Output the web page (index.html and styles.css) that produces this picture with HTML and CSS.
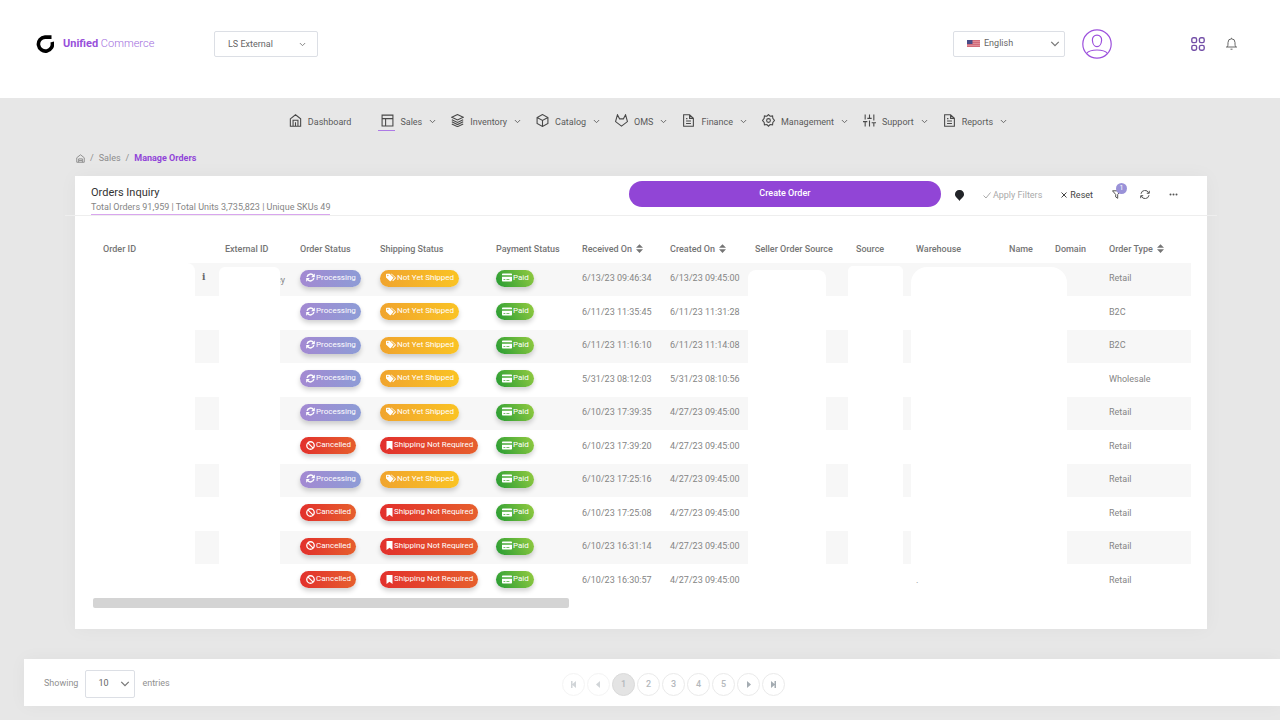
FILE: index.html
```html
<!DOCTYPE html>
<html lang="en">
<head>
<meta charset="utf-8">
<meta name="viewport" content="width=device-width, initial-scale=1">
<title>Manage Orders</title>
<link rel="stylesheet" href="styles.css">
</head>
<body>
<svg class="sprite" aria-hidden="true">
  <symbol id="chevron" viewBox="0 0 24 24"><path d="M3 7l9 9 9-9"/></symbol>
  <symbol id="home" viewBox="0 0 24 24"><path d="M2.500 9L12 1.500 21.500 9v13.500h-19zM7.500 22V11.500h9V22M12 15v7"/></symbol>
  <symbol id="layout" viewBox="0 0 24 24"><path d="M2 2h20v20H2zM2 8.500h20M8.500 8.500V22"/></symbol>
  <symbol id="layers" viewBox="0 0 24 24"><path d="M12 1L1.500 6 12 11l10.500-5zM1.500 10.500L12 15.500l10.500-5M1.500 14.500L12 19.500l10.500-5M1.500 18.500L12 23.300l10.500-4.800"/></symbol>
  <symbol id="box" viewBox="0 0 24 24"><path d="M12 1L2 6.500v11L12 23l10-5.500v-11zM2 6.500L12 12l10-5.500M12 12v11"/></symbol>
  <symbol id="gitlab" viewBox="0 0 24 24"><path d="M12 22.500L1 14 4.500 1.500l4 7.500h7l4-7.500L23 14z"/></symbol>
  <symbol id="file" viewBox="0 0 24 24"><path d="M14 1.500H3v21h18V8zM14 1.500V8h7M7.500 13h9M7.500 17.500h9M7.500 8.500H10"/></symbol>
  <symbol id="gear" viewBox="0 0 24 24"><path d="M12 1l3 3 4.500-.500.500 4.500 3 4-3 3.500-.500 4.500-4.500-.500-3 3-3-3-4.500.500-.500-4.500L1 12l3-4 .500-4.500L9 4z"/><circle cx="12" cy="12" r="3.500"/></symbol>
  <symbol id="sliders" viewBox="0 0 24 24"><path d="M4 23v-9M4 10V1M12 23V12M12 8V1M20 23v-7M20 12V1M0 14h8M8 8h8M16 16h8"/></symbol>
  <symbol id="sort" viewBox="0 0 8 10"><path d="M4 0l4 4.200H0zM4 10L0 5.800h8z"/></symbol>
  <symbol id="sync" viewBox="0 0 24 24"><path d="M3 10.500A9.500 9.500 0 0 1 20 7M21 13.500A9.500 9.500 0 0 1 4 17" fill="none" stroke="currentColor" stroke-width="4"/><path d="M23.500 1v10h-10zM.500 23V13h10z"/></symbol>
  <symbol id="tags" viewBox="0 0 30 24"><path fill-rule="evenodd" d="M0 3a2 2 0 0 1 2-2h9l12 12-9 10a2 2 0 0 1-2 0L0 12zM5.500 4a2 2 0 1 0 0 4 2 2 0 0 0 0-4z"/><path d="M14 1h3l12 11c1 1 1 2 0 3l-8 8-2-2 8-8z"/></symbol>
  <symbol id="ban" viewBox="0 0 24 24"><g fill="none" stroke="currentColor" stroke-width="3.500"><circle cx="12" cy="12" r="10"/><path d="M5 5l14 14"/></g></symbol>
  <symbol id="bookmark" viewBox="0 0 18 24"><path d="M1 0h16v24l-8-6-8 6z"/></symbol>
  <symbol id="card" viewBox="0 0 27 22"><path fill-rule="evenodd" d="M0 2a2 2 0 0 1 2-2h23a2 2 0 0 1 2 2v3H0zM0 9h27v11a2 2 0 0 1-2 2H2a2 2 0 0 1-2-2zM4 15v2h5v-2zM12 15v2h8v-2z"/></symbol>
</svg>

<header class="topbar">
  <a class="brand" href="#">
    <svg class="brand-mark" viewBox="0 0 18 18" aria-hidden="true"><path d="M15.500 2.100H9A7 7 0 1 0 16.100 7" fill="none" stroke="#000" stroke-width="3.600"/></svg>
    <span class="brand-name"><b>Unified</b> Commerce</span>
  </a>
  <div class="select account">
    <select aria-label="Account"><option>LS External</option></select>
    <svg class="caret small" aria-hidden="true"><use href="#chevron"/></svg>
  </div>
  <div class="top-right">
    <div class="select language">
      <svg class="flag" viewBox="0 0 13 7" aria-hidden="true"><path fill="#df8c96" d="M0 0h13v7H0z"/><path stroke="#d16b7a" stroke-width="1" d="M0 .500h13M0 2.500h13M0 4.500h13M0 6.500h13"/><path fill="#484b86" d="M0 0h5.500v4H0z"/></svg>
      <select aria-label="Language"><option>English</option></select>
      <svg class="caret" aria-hidden="true"><use href="#chevron"/></svg>
    </div>
    <button class="plain avatar" aria-label="Profile"><svg viewBox="0 0 30 30" aria-hidden="true"><circle cx="15" cy="15" r="14.200"/><path d="M15 6.200c3 0 4.800 2 4.600 5-.200 3.500-2 6.500-4.600 6.500s-4.400-3-4.600-6.500c-.200-3 1.600-5 4.600-5zM4.500 24.500C6.500 22 10.500 21 15 21s8.500 1 10.500 3.500"/></svg></button>
    <button class="plain apps" aria-label="Apps"><svg viewBox="0 0 14 14" aria-hidden="true"><rect x=".8" y=".8" width="4.800" height="4.800" rx="1.600"/><rect x="8.400" y=".8" width="4.800" height="4.800" rx="1.600"/><rect x=".8" y="8.400" width="4.800" height="4.800" rx="1.600"/><rect x="8.400" y="8.400" width="4.800" height="4.800" rx="1.600"/></svg></button>
    <button class="plain bell" aria-label="Notifications"><svg viewBox="0 0 12 13" aria-hidden="true"><path d="M.500 10h11M1.800 10c.6-1 .7-2 .7-4.500a3.500 3.700 0 0 1 7 0C9.500 8 9.600 9 10.200 10M6 .8v1M5 12.200h2"/></svg></button>
  </div>
</header>

<nav class="menu" aria-label="Main">
  <a class="menu-item first" href="#"><svg class="mi"><use href="#home"/></svg><span>Dashboard</span></a>
  <a class="menu-item active" href="#"><svg class="mi"><use href="#layout"/></svg><span>Sales</span><svg class="mc"><use href="#chevron"/></svg></a>
  <a class="menu-item" href="#"><svg class="mi"><use href="#layers"/></svg><span>Inventory</span><svg class="mc"><use href="#chevron"/></svg></a>
  <a class="menu-item" href="#"><svg class="mi"><use href="#box"/></svg><span>Catalog</span><svg class="mc"><use href="#chevron"/></svg></a>
  <a class="menu-item" href="#"><svg class="mi"><use href="#gitlab"/></svg><span>OMS</span><svg class="mc"><use href="#chevron"/></svg></a>
  <a class="menu-item" href="#"><svg class="mi"><use href="#file"/></svg><span>Finance</span><svg class="mc"><use href="#chevron"/></svg></a>
  <a class="menu-item" href="#"><svg class="mi"><use href="#gear"/></svg><span>Management</span><svg class="mc"><use href="#chevron"/></svg></a>
  <a class="menu-item" href="#"><svg class="mi"><use href="#sliders"/></svg><span>Support</span><svg class="mc"><use href="#chevron"/></svg></a>
  <a class="menu-item" href="#"><svg class="mi"><use href="#file"/></svg><span>Reports</span><svg class="mc"><use href="#chevron"/></svg></a>
</nav>

<main>
  <nav class="crumbs" aria-label="Breadcrumb">
    <a href="#" aria-label="Home"><svg class="crumb-home" viewBox="0 0 24 24"><path d="M2 10L12 2l10 8v12H2zM7 22v-9h10v9M8 17.500h8"/></svg></a>
    <span>/</span><a href="#">Sales</a><span>/</span><a class="current" href="#" aria-current="page">Manage Orders</a>
  </nav>

  <section class="card">
    <header class="card-head">
      <div class="titles">
        <h1>Orders Inquiry</h1>
        <p>Total Orders 91,959 | Total Units 3,735,823 | Unique SKUs 49</p>
      </div>
      <button class="create">Create Order</button>
      <button class="plain" aria-label="Location"><svg class="pin" viewBox="0 0 9 11" aria-hidden="true"><path d="M4.500 0A4.300 4.300 0 0 1 9 4.500C9 7 6 8.500 4.500 11 3 8.500 0 7 0 4.500A4.300 4.300 0 0 1 4.500 0z"/></svg></button>
      <button class="plain apply" disabled><svg class="tick" viewBox="0 0 8 8" aria-hidden="true"><path d="M.500 4.500L3 7l4.500-5.500"/></svg>Apply Filters</button>
      <button class="plain reset"><svg class="cross" viewBox="0 0 6 6" aria-hidden="true"><path d="M.500.500l5 5M5.500.500l-5 5"/></svg>Reset</button>
      <button class="plain filter" aria-label="Filters"><svg viewBox="0 0 9 9" aria-hidden="true"><path d="M.500.800h8L5.700 4.500v3.800L3.700 7V4.500z"/></svg><span class="count">1</span></button>
      <button class="plain refresh" aria-label="Refresh"><svg viewBox="0 0 10 9" aria-hidden="true"><path d="M1 3.800A4 4 0 0 1 8.700 3M9 5.200A4 4 0 0 1 1.300 6M9.300.8V3.300H6.800M.700 8.200V5.700h2.500"/></svg></button>
      <button class="plain more" aria-label="More"><svg viewBox="0 0 9 3" aria-hidden="true"><circle cx="1.500" cy="1.500" r="1"/><circle cx="4.500" cy="1.500" r="1"/><circle cx="7.500" cy="1.500" r="1"/></svg></button>
    </header>

    <div class="table-wrap">
      <table>
        <colgroup><col class="w-id"><col class="w-info"><col class="w-ext"><col class="w-status"><col class="w-ship"><col class="w-pay"><col class="w-recv"><col class="w-made"><col class="w-seller"><col class="w-source"><col class="w-house"><col class="w-name"><col class="w-domain"><col class="w-type"></colgroup>
        <thead>
          <tr><th>Order ID</th><td></td><th>External ID</th><th>Order Status</th><th>Shipping Status</th><th>Payment Status</th><th>Received On<svg class="sort"><use href="#sort"/></svg></th><th>Created On<svg class="sort"><use href="#sort"/></svg></th><th>Seller Order Source</th><th>Source</th><th>Warehouse</th><th>Name</th><th>Domain</th><th>Order Type<svg class="sort"><use href="#sort"/></svg></th></tr>
        </thead>
        <tbody>
          <tr><td></td><td class="info">i</td><td class="ext">cy</td><td><span class="badge violet"><svg class="sq"><use href="#sync"/></svg>Processing</span></td><td><span class="badge amber"><svg class="wide"><use href="#tags"/></svg>Not Yet Shipped</span></td><td><span class="badge green"><svg class="wide"><use href="#card"/></svg>Paid</span></td><td>6/13/23 09:46:34</td><td>6/13/23 09:45:00</td><td></td><td></td><td></td><td></td><td></td><td>Retail</td></tr>
          <tr><td></td><td></td><td></td><td><span class="badge violet"><svg class="sq"><use href="#sync"/></svg>Processing</span></td><td><span class="badge amber"><svg class="wide"><use href="#tags"/></svg>Not Yet Shipped</span></td><td><span class="badge green"><svg class="wide"><use href="#card"/></svg>Paid</span></td><td>6/11/23 11:35:45</td><td>6/11/23 11:31:28</td><td></td><td></td><td></td><td></td><td></td><td>B2C</td></tr>
          <tr><td></td><td></td><td></td><td><span class="badge violet"><svg class="sq"><use href="#sync"/></svg>Processing</span></td><td><span class="badge amber"><svg class="wide"><use href="#tags"/></svg>Not Yet Shipped</span></td><td><span class="badge green"><svg class="wide"><use href="#card"/></svg>Paid</span></td><td>6/11/23 11:16:10</td><td>6/11/23 11:14:08</td><td></td><td></td><td></td><td></td><td></td><td>B2C</td></tr>
          <tr><td></td><td></td><td></td><td><span class="badge violet"><svg class="sq"><use href="#sync"/></svg>Processing</span></td><td><span class="badge amber"><svg class="wide"><use href="#tags"/></svg>Not Yet Shipped</span></td><td><span class="badge green"><svg class="wide"><use href="#card"/></svg>Paid</span></td><td>5/31/23 08:12:03</td><td>5/31/23 08:10:56</td><td></td><td></td><td></td><td></td><td></td><td>Wholesale</td></tr>
          <tr><td></td><td></td><td></td><td><span class="badge violet"><svg class="sq"><use href="#sync"/></svg>Processing</span></td><td><span class="badge amber"><svg class="wide"><use href="#tags"/></svg>Not Yet Shipped</span></td><td><span class="badge green"><svg class="wide"><use href="#card"/></svg>Paid</span></td><td>6/10/23 17:39:35</td><td>4/27/23 09:45:00</td><td></td><td></td><td></td><td></td><td></td><td>Retail</td></tr>
          <tr><td></td><td></td><td></td><td><span class="badge red"><svg class="sq"><use href="#ban"/></svg>Cancelled</span></td><td><span class="badge red"><svg class="slim"><use href="#bookmark"/></svg>Shipping Not Required</span></td><td><span class="badge green"><svg class="wide"><use href="#card"/></svg>Paid</span></td><td>6/10/23 17:39:20</td><td>4/27/23 09:45:00</td><td></td><td></td><td></td><td></td><td></td><td>Retail</td></tr>
          <tr><td></td><td></td><td></td><td><span class="badge violet"><svg class="sq"><use href="#sync"/></svg>Processing</span></td><td><span class="badge amber"><svg class="wide"><use href="#tags"/></svg>Not Yet Shipped</span></td><td><span class="badge green"><svg class="wide"><use href="#card"/></svg>Paid</span></td><td>6/10/23 17:25:16</td><td>4/27/23 09:45:00</td><td></td><td></td><td></td><td></td><td></td><td>Retail</td></tr>
          <tr><td></td><td></td><td></td><td><span class="badge red"><svg class="sq"><use href="#ban"/></svg>Cancelled</span></td><td><span class="badge red"><svg class="slim"><use href="#bookmark"/></svg>Shipping Not Required</span></td><td><span class="badge green"><svg class="wide"><use href="#card"/></svg>Paid</span></td><td>6/10/23 17:25:08</td><td>4/27/23 09:45:00</td><td></td><td></td><td></td><td></td><td></td><td>Retail</td></tr>
          <tr><td></td><td></td><td></td><td><span class="badge red"><svg class="sq"><use href="#ban"/></svg>Cancelled</span></td><td><span class="badge red"><svg class="slim"><use href="#bookmark"/></svg>Shipping Not Required</span></td><td><span class="badge green"><svg class="wide"><use href="#card"/></svg>Paid</span></td><td>6/10/23 16:31:14</td><td>4/27/23 09:45:00</td><td></td><td></td><td></td><td></td><td></td><td>Retail</td></tr>
          <tr><td></td><td></td><td></td><td><span class="badge red"><svg class="sq"><use href="#ban"/></svg>Cancelled</span></td><td><span class="badge red"><svg class="slim"><use href="#bookmark"/></svg>Shipping Not Required</span></td><td><span class="badge green"><svg class="wide"><use href="#card"/></svg>Paid</span></td><td>6/10/23 16:30:57</td><td>4/27/23 09:45:00</td><td></td><td></td><td class="above">.</td><td></td><td></td><td>Retail</td></tr>
        </tbody>
      </table>
      <div class="redactions" aria-hidden="true"><i class="r1"></i><i class="r2"></i><i class="r3"></i><i class="r4"></i><i class="r5"></i></div>
    </div>
    <div class="scroll-track"><div class="scroll-thumb"></div></div>
  </section>
</main>

<footer class="pager">
  <div class="page-size">
    <label for="size">Showing</label>
    <div class="select size"><select id="size"><option>10</option></select><svg class="caret" aria-hidden="true"><use href="#chevron"/></svg></div>
    <span>entries</span>
  </div>
  <div class="pages">
    <button class="page" disabled aria-label="First"><svg viewBox="0 0 7 7"><path d="M1 0h1.500v3L6 0v7L2.500 4v3H1z"/></svg></button>
    <button class="page" disabled aria-label="Previous"><svg viewBox="0 0 7 7"><path d="M5 0v7L1 3.500z"/></svg></button>
    <button class="page on" aria-current="page">1</button>
    <button class="page">2</button>
    <button class="page">3</button>
    <button class="page">4</button>
    <button class="page">5</button>
    <button class="page" aria-label="Next"><svg viewBox="0 0 7 7"><path d="M2 0v7l4-3.500z"/></svg></button>
    <button class="page" aria-label="Last"><svg viewBox="0 0 7 7"><path d="M6 0H4.500v3L1 0v7l3.500-3v3H6z"/></svg></button>
  </div>
</footer>
</body>
</html>
```

FILE: styles.css
```css
* { box-sizing: border-box; }
body { margin: 0; background: #e7e7e7; color: #858585; font: 9px/12px Roboto, "Liberation Sans", sans-serif; }
a { color: inherit; text-decoration: none; }
svg { display: block; flex: none; fill: none; stroke: currentColor; }
button, select { font: inherit; color: inherit; }
.sprite { position: absolute; width: 0; height: 0; }
.plain { display: flex; align-items: center; padding: 0; border: 0; background: none; }

.topbar { display: flex; align-items: flex-start; height: 98px; padding: 28px 42px 0 36px; background: #fff; }
.brand { display: flex; align-items: center; gap: 9px; height: 31px; width: 178px; }
.brand-mark { width: 18px; height: 18px; }
.brand-name { font-size: 11px; font-weight: 300; color: #a06bdd; }
.brand-name b { font-weight: 700; color: #9850da; }

.select { position: relative; }
.select select { appearance: none; width: 100%; height: 100%; padding: 0 13px 1px; border: 1px solid #dcdfe5; border-radius: 2px; background: #fff; color: #666; }
.caret { position: absolute; right: 5px; top: 50%; width: 10px; height: 10px; margin-top: -5px; color: #777; stroke-width: 3; pointer-events: none; }
.caret.small { right: 12px; width: 7px; height: 7px; margin-top: -3px; }
.account { width: 104px; height: 26px; margin-top: 3px; }
.top-right { display: flex; align-items: center; height: 31px; margin-left: auto; }
.language { width: 112px; height: 26px; margin-right: 17px; }
.language select { padding-left: 30px; }
.flag { position: absolute; left: 14px; top: 9px; width: 13px; height: 7px; stroke: none; }
.avatar svg { width: 30px; height: 30px; stroke: #9c50dc; stroke-width: 1.200; }
.apps { margin-left: 79px; color: #7450a8; }
.apps svg { width: 14px; height: 14px; stroke-width: 1.400; }
.bell { margin-left: 20px; color: #666; }
.bell svg { width: 13px; height: 13px; }

.menu { display: flex; justify-content: center; gap: 16px; padding: 14px 0 0 15px; color: #5a5a5a; }
.menu-item { display: flex; align-items: center; gap: 7px; height: 19px; }
.menu-item span { margin-top: 1px; }
.menu-item.first { margin-right: 14px; }
.mi { width: 13px; height: 13px; margin: 0 -1px 2px 0; color: #484848; stroke-width: 2; }
.mc { width: 7px; height: 7px; margin-right: -1px; stroke-width: 3; }
.active { position: relative; }
.active::before { content: ""; position: absolute; left: -3px; bottom: 0; width: 17px; height: 1px; background: #ad7ae6; }

.crumbs { display: flex; align-items: center; gap: 5px; padding: 21px 0 12px 76px; color: #8c8c8c; }
.crumb-home { width: 9px; height: 9px; stroke-width: 2.500; }
.crumbs .current { color: #9145d8; font-weight: 700; }

.card { margin: 0 73px 0 75px; padding-bottom: 21px; background: #fff; box-shadow: 0 0 18px rgba(0, 0, 0, .04); }
.card-head { position: relative; display: flex; align-items: center; gap: 19px; height: 39px; padding: 0 29px 0 16px; }
.card-head::after { content: ""; position: absolute; left: -10px; right: -10px; bottom: -1px; height: 1px; background: #eee; }
.card-head .plain { margin-bottom: 2px; }
.titles { align-self: flex-end; margin-right: auto; }
h1 { margin: 0; font-size: 11px; line-height: 14px; font-weight: 400; color: #333; }
.titles p { margin: 0; line-height: 14px; border-bottom: 1px solid #d9a6ee; }
.create { flex: 0 1 312px; height: 26px; margin: 0 -5px 4px 0; padding: 0 0 2px; border: 0; border-radius: 13px; background: #9145d6; color: #fff; font-weight: 500; }
.pin { width: 9px; height: 11px; margin-top: 2px; stroke: none; fill: #222529; }
.apply { gap: 2px; color: #aaa; }
.tick { width: 8px; height: 8px; }
.reset { gap: 3px; color: #444; }
.cross { width: 6px; height: 6px; }
.filter { position: relative; color: #555; }
.filter svg { width: 9px; height: 9px; }
.count { position: absolute; left: 4px; top: -7px; width: 11px; height: 11px; border-radius: 50%; background: #9a92d8; color: #fff; font-size: 7px; line-height: 11px; text-align: center; }
.refresh svg { width: 10px; height: 9px; color: #555; }
.more svg { width: 9px; height: 3px; fill: #555; stroke: none; }

.table-wrap { position: relative; margin: 19px 16px 0 18px; }
table { width: 100%; table-layout: fixed; border-collapse: collapse; }
.w-id { width: 103px; } .w-info { width: 22px; } .w-ext { width: 75px; } .w-status { width: 80px; }
.w-ship { width: 116px; } .w-pay { width: 86px; } .w-recv { width: 88px; } .w-made { width: 85px; }
.w-seller { width: 101px; } .w-source { width: 60px; } .w-house { width: 93px; } .w-name { width: 46px; }
.w-domain { width: 54px; } .w-type { width: 89px; }
th, td { padding: 0 0 0 7px; text-align: left; white-space: nowrap; }
th { height: 29px; font-weight: 500; color: #757575; }
th:first-child { padding-left: 10px; }
tbody td { padding-bottom: 3px; }
tbody tr { height: 33px; }
tbody tr:nth-child(even) { height: 34px; }
tbody tr:nth-child(odd) { background: #f7f7f7; }
.sort { display: inline-block; width: 7px; height: 9px; margin-left: 4px; vertical-align: -1px; fill: #757575; stroke: none; }
tbody .info { padding: 0 0 5px 6px; color: #666; font: 700 9px/12px "DejaVu Serif", serif; }
tbody .ext { padding-right: 8px; padding-bottom: 0; text-align: right; }
.above { position: relative; z-index: 2; }

.badge { display: inline-flex; align-items: center; gap: 2px; height: 17px; padding: 0 6px 1px; border-radius: 9px; color: #fff; font-size: 8px; vertical-align: middle; box-shadow: 0 3px 5px rgba(0, 0, 0, .18); }
.badge svg { fill: #fff; stroke: none; height: 9px; }
.badge .sq { width: 9px; margin-right: -1px; }
.badge .wide { width: 10px; margin-right: -1px; }
.badge .slim { width: 7px; margin-right: -1px; }
.badge { padding-right: 5px; }
.violet { background: linear-gradient(90deg, #a389d2, #8d9cd6); }
.amber { background: linear-gradient(90deg, #f0a42e, #fac324); }
.red { background: linear-gradient(90deg, #e2302c, #e65f2d); }
.green { background: linear-gradient(60deg, #259b33, #94cb41); }

.redactions { position: absolute; z-index: 1; inset: 29px 0 0; display: grid; grid-template-columns: 102fr 24fr 61fr 468fr 78fr 22fr 55fr 8fr 156fr 124fr; pointer-events: none; }
.redactions i { background: #fff; }
.r1 { grid-column: 1; border-radius: 0 8px 0 0; }
.r2 { grid-column: 3; margin-top: 4px; border-radius: 6px 6px 0 0; }
.r3 { grid-column: 5; margin-top: 7px; border-radius: 8px 8px 0 0; }
.r4 { grid-column: 7; margin-top: 3px; border-radius: 5px 5px 0 0; }
.r5 { grid-column: 9; margin-top: 4px; border-radius: 16px 16px 0 0; }

.scroll-track { margin: 0 16px 0 18px; }
.scroll-thumb { width: 476px; height: 10px; border-radius: 2px; background: #d4d4d4; }

.pager { display: flex; align-items: center; height: 47px; margin: 30px 0 14px 24px; padding-left: 20px; background: #fff; box-shadow: 0 0 18px rgba(0, 0, 0, .04); }
.page-size { display: flex; align-items: center; gap: 7px; flex: 0 1 518px; color: #909090; }
.size { width: 50px; height: 28px; margin-top: 2px; }
.size select { padding: 0 12px 1px; }
.pages { display: flex; gap: 2px; padding-top: 3px; }
.page { display: flex; align-items: center; justify-content: center; width: 23px; height: 23px; padding: 0; border: 1px solid #eaeaea; border-radius: 50%; background: #fff; color: #b4b8bc; font-weight: 500; }
.page svg { width: 7px; height: 7px; fill: #a4acb2; stroke: none; }
.page:disabled { opacity: .5; }
.page.on { background: #e4e4e4; border-color: #dadada; }
```
